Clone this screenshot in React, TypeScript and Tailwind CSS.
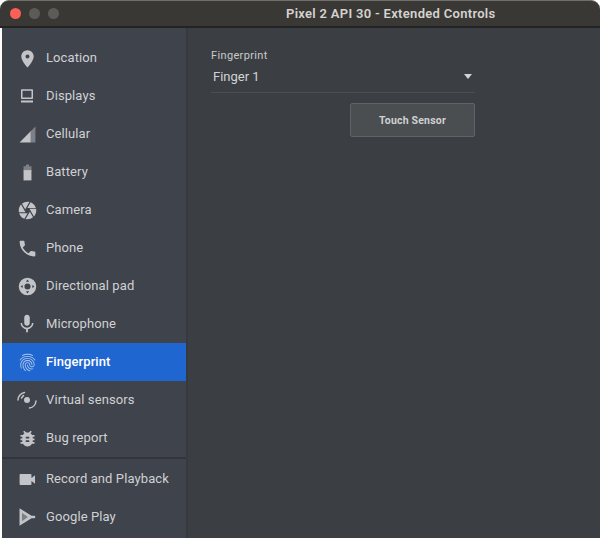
import type { ReactNode } from 'react'

const c = '#c2c4c7'
const size = 'h-[21px] w-[21px]'

const icons: Record<string, ReactNode> = {
  location: (
    <svg viewBox="0 0 24 24" className="h-[23px] w-[23px]" fill={c}>
      <path fillRule="evenodd" d="M12 3.500c-3.600 0-6.500 2.900-6.500 6.500 0 4.600 6.500 11.500 6.500 11.500s6.500-6.900 6.500-11.500c0-3.600-2.900-6.500-6.500-6.500zm0 8.600a2 2 0 1 1 0-4.200 2 2 0 0 1 0 4.200z" />
    </svg>
  ),
  displays: (
    <svg viewBox="0 0 24 24" className="h-[18px] w-[18px]" fill={c}>
      <path fillRule="evenodd" d="M5 3h14a1 1 0 0 1 1 1v11a1 1 0 0 1-1 1H5a1 1 0 0 1-1-1V4a1 1 0 0 1 1-1zm1 2v9h12V5H6zM4 18h16v2.500H4z" />
    </svg>
  ),
  cellular: (
    <svg viewBox="0 0 24 24" className="h-[19px] w-[19px]">
      <path fill="#7d8086" d="M22 2v20h-6V8z" />
      <path fill={c} d="M16 8v14H2z" />
    </svg>
  ),
  battery: (
    <svg viewBox="0 0 24 24" className="h-[19px] w-[19px]">
      <path fill="#7d8086" d="M10 2h4v2h3v6H7V4h3z" />
      <path fill={c} d="M7 9h10v13H7z" />
    </svg>
  ),
  camera: (
    <svg viewBox="0 0 24 24" className={size} fill={c}>
      <path d="M9.400 10.500l4.770-8.260C13.470 2.090 12.750 2 12 2c-2.400 0-4.600.85-6.320 2.250l3.660 6.350.06-.1zM21.540 9c-.92-2.920-3.150-5.260-6-6.340L11.880 9h9.660zm.26 1h-7.490l.29.5 4.760 8.250C21 16.970 22 14.610 22 12c0-.69-.07-1.350-.2-2zM8.540 12l-3.900-6.750C3.010 7.030 2 9.390 2 12c0 .69.07 1.350.2 2h7.490l-1.150-2zm-6.080 3c.92 2.920 3.150 5.260 6 6.340L12.120 15H2.460zm11.270 0l-3.900 6.760c.7.15 1.420.24 2.170.24 2.400 0 4.600-.85 6.320-2.250l-3.660-6.350-.93 1.600z" />
    </svg>
  ),
  phone: (
    <svg viewBox="0 0 24 24" className={size} fill={c}>
      <path d="M6.620 10.790c1.440 2.830 3.760 5.140 6.590 6.590l2.200-2.200c.27-.27.67-.36 1.020-.24 1.120.37 2.330.57 3.570.57.55 0 1 .45 1 1V20c0 .55-.45 1-1 1-9.390 0-17-7.610-17-17 0-.55.45-1 1-1h3.500c.55 0 1 .45 1 1 0 1.250.2 2.450.57 3.570.11.35.03.74-.25 1.020l-2.200 2.200z" />
    </svg>
  ),
  dpad: (
    <svg viewBox="0 0 24 24" className={size} fill={c}>
      <path fillRule="evenodd" d="M12 2a10 10 0 1 1 0 20 10 10 0 0 1 0-20zm0 6.500a3.500 3.500 0 1 0 0 7 3.500 3.500 0 0 0 0-7zM12 4l-1.800 2.500h3.600zM12 20l1.800-2.500h-3.600zM4 12l2.500 1.800v-3.600zM20 12l-2.500-1.800v3.600z" />
    </svg>
  ),
  mic: (
    <svg viewBox="0 0 24 24" className="h-[22px] w-[22px]" fill={c}>
      <path d="M12 14c1.660 0 3-1.340 3-3V5c0-1.660-1.340-3-3-3S9 3.340 9 5v6c0 1.660 1.340 3 3 3zm5.300-3c0 3-2.540 5.100-5.300 5.100S6.700 14 6.700 11H5c0 3.410 2.720 6.230 6 6.720V21h2v-3.280c3.280-.48 6-3.300 6-6.720h-1.700z" />
    </svg>
  ),
  fingerprint: (
    <svg viewBox="0 0 24 24" className={size} fill="#aec6ea">
      <path d="M17.810 4.470c-.08 0-.16-.02-.23-.06C15.660 3.420 14 3 12.010 3c-1.980 0-3.860.47-5.570 1.410-.24.13-.54.04-.68-.2-.13-.24-.04-.55.2-.68C7.820 2.520 9.860 2 12.010 2c2.130 0 3.990.47 6.030 1.520.25.13.34.43.21.67-.09.18-.26.28-.44.28zM3.500 9.720c-.1 0-.2-.03-.29-.09-.23-.16-.28-.47-.12-.7.99-1.400 2.250-2.500 3.750-3.270C9.980 4.040 14 4.030 17.150 5.650c1.500.77 2.760 1.860 3.750 3.250.16.22.11.54-.12.7-.23.16-.54.11-.7-.12-.9-1.260-2.040-2.250-3.390-2.940-2.870-1.470-6.540-1.470-9.400.01-1.360.7-2.500 1.700-3.400 2.960-.08.14-.23.21-.39.21zm6.250 12.070c-.13 0-.26-.05-.35-.15-.87-.87-1.340-1.430-2.010-2.640-.69-1.230-1.050-2.730-1.050-4.340 0-2.970 2.540-5.390 5.660-5.390s5.660 2.420 5.660 5.390c0 .28-.22.5-.5.5s-.5-.22-.5-.5c0-2.420-2.090-4.390-4.660-4.390-2.570 0-4.660 1.970-4.660 4.390 0 1.440.32 2.770.93 3.850.64 1.150 1.080 1.640 1.850 2.420.19.2.19.51 0 .71-.11.1-.24.15-.37.15zm7.170-1.850c-1.190 0-2.240-.3-3.100-.89-1.490-1.010-2.380-2.650-2.380-4.390 0-.28.22-.5.5-.5s.5.22.5.5c0 1.410.72 2.740 1.940 3.560.71.48 1.540.71 2.540.71.24 0 .64-.03 1.040-.1.27-.05.53.13.58.41.05.27-.13.53-.41.58-.57.11-1.070.12-1.210.12zM14.910 22c-.04 0-.09-.01-.13-.02-1.590-.44-2.630-1.030-3.720-2.100-1.400-1.390-2.170-3.240-2.170-5.220 0-1.620 1.380-2.940 3.080-2.940 1.700 0 3.080 1.320 3.080 2.940 0 1.070.93 1.940 2.080 1.940s2.080-.87 2.080-1.940c0-3.770-3.250-6.830-7.250-6.830-2.840 0-5.440 1.580-6.610 4.030-.39.81-.59 1.760-.59 2.800 0 .78.07 2.010.67 3.610.1.26-.03.55-.29.64-.26.1-.55-.04-.64-.29-.49-1.310-.73-2.610-.73-3.960 0-1.200.23-2.290.68-3.240 1.330-2.790 4.280-4.600 7.510-4.600 4.550 0 8.250 3.510 8.250 7.830 0 1.620-1.380 2.940-3.080 2.940s-3.080-1.320-3.080-2.940c0-1.070-.93-1.940-2.080-1.940s-2.080.87-2.080 1.940c0 1.710.66 3.310 1.870 4.510.95.94 1.860 1.460 3.270 1.850.27.07.42.35.35.61-.05.23-.26.38-.47.38z" />
    </svg>
  ),
  sensors: (
    <svg viewBox="0 0 24 24" className="h-6 w-6" fill="none" stroke={c} strokeWidth="1.500" strokeLinecap="round">
      <circle cx="12" cy="12" r="3" fill={c} stroke="none" />
      <path d="M3 12C3 8 6 5 9.500 4.500" />
      <path d="M21 13c-.5 4-3 6.500-6.500 7" />
      <path d="M6.500 10 8.500 7.500" />
    </svg>
  ),
  bug: (
    <svg viewBox="0 0 24 24" className={size} fill={c}>
      <path d="M20 8h-2.810c-.45-.78-1.070-1.450-1.820-1.960L17 4.410 15.590 3l-2.170 2.170C12.960 5.060 12.490 5 12 5c-.49 0-.96.06-1.410.17L8.410 3 7 4.410l1.620 1.630C7.880 6.550 7.260 7.220 6.810 8H4v2h2.090c-.05.33-.09.66-.09 1v1H4v2h2v1c0 .34.04.67.09 1H4v2h2.810c1.040 1.790 2.970 3 5.190 3s4.150-1.210 5.190-3H20v-2h-2.090c.05-.33.09-.66.09-1v-1h2v-2h-2v-1c0-.34-.04-.67-.09-1H20V8zm-6 8h-4v-2h4v2zm0-4h-4v-2h4v2z" />
    </svg>
  ),
  record: (
    <svg viewBox="0 0 24 24" className="h-[19px] w-[19px]" fill={c}>
      <path d="M3 5h13a1 1 0 0 1 1 1v4l4.500-3.500v11L17 14v4a1 1 0 0 1-1 1H3a1 1 0 0 1-1-1V6a1 1 0 0 1 1-1z" />
    </svg>
  ),
  play: (
    <svg viewBox="0 0 24 24" className="h-[20px] w-[20px]" fill={c}>
      <path d="M3 1.500 17.500 10.500h3a1.500 1.500 0 0 1 0 3h-3L3 22.500z" />
      <path d="M6 7v10l7-5z" fill="#7d8086" />
    </svg>
  ),
}

const rows1 = [
  { label: 'Location', icon: icons.location },
  { label: 'Displays', icon: icons.displays },
  { label: 'Cellular', icon: icons.cellular },
  { label: 'Battery', icon: icons.battery },
  { label: 'Camera', icon: icons.camera },
  { label: 'Phone', icon: icons.phone },
  { label: 'Directional pad', icon: icons.dpad },
  { label: 'Microphone', icon: icons.mic },
  { label: 'Fingerprint', icon: icons.fingerprint, active: true },
  { label: 'Virtual sensors', icon: icons.sensors },
  { label: 'Bug report', icon: icons.bug },
]

const rows2 = [
  { label: 'Record and Playback', icon: icons.record },
  { label: 'Google Play', icon: icons.play },
]

function NavRow({ label, icon, active }: { label: string; icon: ReactNode; active?: boolean }) {
  return (
    <div
      className={
        'flex h-[38px] items-center pl-[13px] ' +
        (active ? 'bg-[#1f66d0] font-medium text-white' : 'text-[#cfd1d3]')
      }
    >
      <span className="flex w-6 items-center justify-center">{icon}</span>
      <span className="ml-[7px] text-[13px] tracking-[0.1px]">{label}</span>
    </div>
  )
}

export default function App() {
  return (
    <div className="flex h-[538px] w-[600px] flex-col overflow-hidden bg-white font-['Roboto',sans-serif]">
      <div className="flex h-[28px] shrink-0 items-center rounded-t-[9px] border-t border-b-2 border-t-[#6f6e6c] border-b-[#232323] bg-[#3a3835] pl-[10px]">
        <span className="h-[11px] w-[11px] rounded-full bg-[#fb5f57]" />
        <span className="ml-2 h-[11px] w-[11px] rounded-full bg-[#5c5b59]" />
        <span className="ml-2 h-[11px] w-[11px] rounded-full bg-[#5c5b59]" />
        <span className="ml-[227px] text-[13px] font-semibold tracking-[0.3px] text-[#d4d3d1]">
          Pixel 2 API 30 - Extended Controls
        </span>
      </div>
      <div className="flex min-h-0 flex-1 pl-[2px]">
        <div className="flex w-[184px] shrink-0 flex-col bg-[#3f434c] pt-[11px]">
          {rows1.map((r) => (
            <NavRow key={r.label} {...r} />
          ))}
          <div className="mb-[1px] h-[2px] bg-[#33353a]" />
          {rows2.map((r) => (
            <NavRow key={r.label} {...r} />
          ))}
        </div>
        <div className="flex-1 border-l-2 border-[#36393d] bg-[#3b3f43] pt-[21px] pl-[23px]">
          <div className="w-[264px]">
            <div className="text-[11px] leading-[14px] tracking-[0.35px] text-[#c8cacb]">Fingerprint</div>
            <div className="flex h-[30px] items-center justify-between border-b border-[#4b4f53] pr-[3px] pb-[2px] pl-[2px]">
              <span className="text-[13px] text-[#d2d3d5]">Finger 1</span>
              <span className="h-0 w-0 border-x-[4.500px] border-t-[5px] border-x-transparent border-t-[#d2d3d5]" />
            </div>
            <div className="mt-[10px] flex justify-end">
              <div className="flex h-[34px] w-[125px] items-center justify-center rounded-[2px] border border-[#5f6366] bg-[#4a4e51] pt-[1px] text-[10.500px] font-bold tracking-[0.2px] text-[#cfd1d2]">
                Touch Sensor
              </div>
            </div>
          </div>
        </div>
      </div>
    </div>
  )
}
